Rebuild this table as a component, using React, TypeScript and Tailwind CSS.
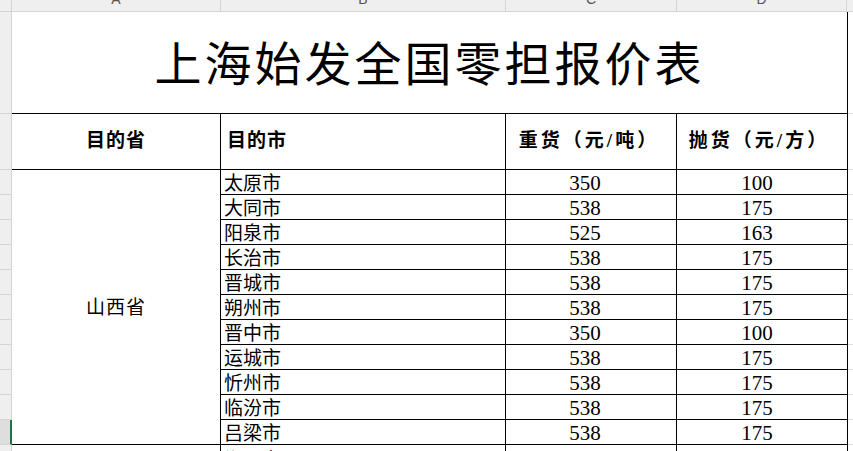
const rows: [string, string, string][] = [
  ["太原市", "350", "100"],
  ["大同市", "538", "175"],
  ["阳泉市", "525", "163"],
  ["长治市", "538", "175"],
  ["晋城市", "538", "175"],
  ["朔州市", "538", "175"],
  ["晋中市", "350", "100"],
  ["运城市", "538", "175"],
  ["忻州市", "538", "175"],
  ["临汾市", "538", "175"],
  ["吕梁市", "538", "175"],
];

const serif = "font-['Liberation_Serif','Noto_Sans_CJK_SC',serif]";

function ColHead({ label, w }: { label: string; w: string }) {
  return (
    <div className={`${w} h-full border-r border-[#d4d4d4] flex justify-center overflow-hidden`}>
      <span className="-mt-[8px] leading-[14px]">{label}</span>
    </div>
  );
}

export default function App() {
  return (
    <div className={`w-[853px] h-[451px] overflow-hidden bg-white flex flex-col text-black ${serif}`}>
      {/* sheet column letters */}
      <div className="flex h-[12px] shrink-0 bg-[#efefef] border-b border-[#d4d4d4] text-[#555] text-[14px] font-['Liberation_Sans',sans-serif]">
        <div className="w-[12px] border-r border-[#d4d4d4]" />
        <ColHead label="A" w="w-[209px]" />
        <ColHead label="B" w="w-[285px]" />
        <ColHead label="C" w="w-[171px]" />
        <ColHead label="D" w="w-[170px]" />
        <div className="flex-1" />
      </div>

      <div className="flex flex-1">
        {/* sheet row numbers */}
        <div className="w-[12px] shrink-0 flex flex-col bg-[#efefef]">
          <div className="h-[102px] border-r border-b border-[#d4d4d4]" />
          <div className="h-[56px] border-r border-b border-[#d4d4d4]" />
          {rows.map((_, i) =>
            i === rows.length - 1 ? (
              <div key={i} className="h-[25px] bg-[#dedede] border-r-2 border-b border-r-[#217346] border-b-[#d4d4d4]" />
            ) : (
              <div key={i} className="h-[25px] border-r border-b border-[#d4d4d4]" />
            )
          )}
          <div className="flex-1 border-r border-[#d4d4d4]" />
        </div>

        {/* table */}
        <div className="w-[836px] shrink-0 flex flex-col">
          <div className="h-[102px] border-b border-r border-black flex items-center justify-center pt-[5px]">
            <span className="text-[47px] leading-none tracking-[3px]">上海始发全国零担报价表</span>
          </div>

          <div className="grid grid-cols-[209px_285px_171px_171px] h-[56px] border-b border-black font-bold text-[19px] tracking-[1px]">
            <div className="border-r border-black flex items-center justify-center">目的省</div>
            <div className="border-r border-black flex items-center pl-[6px]">目的市</div>
            <div className="border-r border-black flex items-center justify-center pr-[4px] tracking-[3px]">重货（元/吨）</div>
            <div className="border-r border-black flex items-center justify-center pr-[6px] tracking-[3px]">抛货（元/方）</div>
          </div>

          <div className="grid grid-cols-[209px_285px_171px_171px] grid-rows-[repeat(11,25px)] text-[19px]">
            <div className="row-span-11 border-r border-b border-black flex items-center justify-center pt-[3px] tracking-[1px]">
              山西省
            </div>
            {rows.map(([city, heavy, light]) => (
              <div key={city} className="contents">
                <div className="border-r border-b border-black pl-[3px] leading-[25px] pt-[1px]">{city}</div>
                <div className="border-r border-b border-black flex items-center justify-center pr-[12px] pt-[3px] text-[21px] leading-none font-['Liberation_Serif',serif]">
                  {heavy}
                </div>
                <div className="border-r border-b border-black flex items-center justify-center pr-[10px] pt-[3px] text-[21px] leading-none font-['Liberation_Serif',serif]">
                  {light}
                </div>
              </div>
            ))}
          </div>

          <div className="grid grid-cols-[209px_285px_171px_171px] h-[25px] text-[19px]">
            <div className="border-r border-black" />
            <div className="border-r border-black pl-[3px] leading-[25px] pt-[3px]">郑州市</div>
            <div className="border-r border-black" />
            <div className="border-r border-black" />
          </div>
        </div>

        {/* grid beyond the table */}
        <div className="flex-1 flex flex-col">
          <div className="h-[102px] border-b border-[#e1e1e1]" />
          <div className="h-[56px] border-b border-[#e1e1e1]" />
          {rows.map((_, i) => (
            <div key={i} className="h-[25px] border-b border-[#e1e1e1]" />
          ))}
        </div>
      </div>
    </div>
  );
}
